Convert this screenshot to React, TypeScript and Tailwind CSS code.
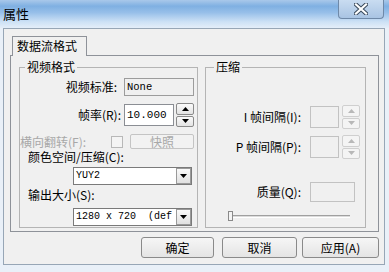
import React from "react";

const cjk = "font-['Noto_Sans_CJK_SC','Noto_Sans',sans-serif]";
const mono = "font-['Liberation_Mono',monospace]";

const Tri: React.FC<{ up?: boolean; color?: string }> = ({ up, color = "#000" }) => (
  <svg width="7" height="4" viewBox="0 0 7 4">
    {up ? <polygon points="0,4 7,4 3.5,0" fill={color} /> : <polygon points="0,0 7,0 3.5,4" fill={color} />}
  </svg>
);

const Spinner: React.FC<{ disabled?: boolean }> = ({ disabled }) => {
  const btn = disabled
    ? "border-[#cfcfcf] bg-[#f4f4f4]"
    : "border-[#8a8a8a] bg-[linear-gradient(#fafafa,#e3e3e3)]";
  const c = disabled ? "#b8b8b8" : "#000";
  return (
    <div className="flex flex-col w-[18px] h-[24px] gap-[1px]">
      <div className={`flex-1 flex items-center justify-center border rounded-[2px] ${btn}`}>
        <Tri up color={c} />
      </div>
      <div className={`flex-1 flex items-center justify-center border rounded-[2px] ${btn}`}>
        <Tri color={c} />
      </div>
    </div>
  );
};

const Combo: React.FC<{ value: string }> = ({ value }) => (
  <div className="ml-[53px] w-[119px] h-[18px] flex border border-[#7a7a7a] bg-white">
    <div className={`flex-1 whitespace-pre pl-[2px] text-[10px] leading-[16px] ${mono}`}>{value}</div>
    <div className="w-[15px] h-full flex items-center justify-center border border-[#9a9a9a] bg-[linear-gradient(#fafafa,#e0e0e0)]">
      <Tri />
    </div>
  </div>
);

const Button: React.FC<{ label: string; w: string }> = ({ label, w }) => (
  <button className={`${w} h-[21px] border border-[#8a8a8a] rounded-[3px] bg-[linear-gradient(#f6f6f6,#e4e4e4)] text-[12px] leading-[19px] text-black ${cjk}`}>
    {label}
  </button>
);

export default function App() {
  return (
    <div className={`w-[389px] h-[272px] overflow-hidden bg-[#e9f0f8] flex flex-col text-black ${cjk}`}>
      {/* Title bar */}
      <div className="h-[28px] flex items-start justify-between bg-[linear-gradient(180deg,#a9c8ea_0%,#7fb0e2_22%,#97bfe9_45%,#cde1f5_78%,#e4eef9_100%)]">
        <div className="pl-[3px] pt-[6px] text-[13px] leading-[16px] text-black">属性</div>
        <div className="mr-[5px] w-[46px] h-[19px] rounded-b-[4px] border border-t-0 border-[#6f89a8] bg-[linear-gradient(#c9dcf1,#a9c4e3)] flex items-center justify-center">
          <svg width="14" height="12" viewBox="0 0 14 12">
            <path d="M2 1.5 L12 10.5 M12 1.5 L2 10.5" stroke="#3a4a5c" strokeWidth="4.2" strokeLinecap="square" />
            <path d="M2 1.5 L12 10.5 M12 1.5 L2 10.5" stroke="#ffffff" strokeWidth="2.2" strokeLinecap="square" />
          </svg>
        </div>
      </div>

      {/* Client area */}
      <div className="ml-[3px] w-[382px] h-[237px] border border-[#97a6b6] bg-[#f0f0f0] flex flex-col">
        <div className="pl-[6px] pt-[7px]">
          {/* Tab header */}
          <div className="relative z-10 ml-[2px] -mb-px w-[75px] h-[20px] border border-b-0 border-[#8e9299] bg-[#f0f0f0] text-[12px] leading-[18px] pl-[4px]">
            数据流格式
          </div>
          {/* Tab panel */}
          <div className="w-[369px] h-[177px] border border-[#8e9299] bg-[#f0f0f0] flex pl-[8px] pt-[4px] gap-[7px]">
            {/* 视频格式 */}
            <fieldset className="w-[179px] h-[168px] border border-[#b4b4b4] flex flex-col">
              <legend className="ml-[5px] px-[2px] text-[12px] leading-[14px]">视频格式</legend>
              <div className="mt-[4px] h-[18px] flex items-center">
                <div className="w-[101px] text-right text-[12px] leading-[14px] pr-[4px]">视频标准:</div>
                <div className={`ml-[3px] w-[70px] h-[18px] border border-[#9c9c9c] bg-[#f0f0f0] pl-[2px] text-[10.5px] leading-[16px] ${mono}`}>None</div>
              </div>
              <div className="mt-[7px] h-[24px] flex items-center">
                <div className="w-[101px] text-right text-[12px] leading-[14px]">帧率(R):</div>
                <div className={`ml-[3px] w-[50px] h-[22px] border border-[#8b8e94] bg-white pl-[2px] text-[11px] leading-[20px] ${mono}`}>10.000</div>
                <div className="ml-[2px]"><Spinner /></div>
              </div>
              <div className="mt-[7px] h-[15px] flex items-center">
                <div className="w-[78px] text-[12px] leading-[14px] text-[#a8a8a8] whitespace-nowrap">横向翻转(F):</div>
                <div className="ml-[13px] w-[12px] h-[12px] border border-[#b8b8b8] bg-[#f4f4f4]" />
                <div className="ml-[7px] w-[64px] h-[15px] border border-[#c4c4c4] rounded-[2px] bg-[#f2f2f2] text-center text-[12px] leading-[13px] text-[#a8a8a8]">快照</div>
              </div>
              <div className="mt-[1px] h-[14px] pl-[8px] text-[12px] leading-[14px] whitespace-nowrap">颜色空间/压缩(C):</div>
              <div className="mt-[3px]"><Combo value="YUY2" /></div>
              <div className="mt-[3px] h-[14px] pl-[8px] text-[12px] leading-[14px]">输出大小(S):</div>
              <div className="mt-[6px]"><Combo value="1280 x 720  (def" /></div>
            </fieldset>

            {/* 压缩 */}
            <fieldset className="w-[161px] h-[168px] border border-[#b4b4b4] flex flex-col">
              <legend className="ml-[8px] px-[2px] text-[12px] leading-[14px]">压缩</legend>
              <div className="mt-[31px] h-[24px] flex items-center">
                <div className="w-[95px] text-right text-[12px] leading-[14px] whitespace-nowrap">I 帧间隔(I):</div>
                <div className="ml-[9px] w-[29px] h-[22px] border border-[#c2c2c2] bg-[#f0f0f0]" />
                <div className="ml-[3px]"><Spinner disabled /></div>
              </div>
              <div className="mt-[6px] h-[24px] flex items-center">
                <div className="w-[95px] text-right text-[12px] leading-[14px] whitespace-nowrap">P 帧间隔(P):</div>
                <div className="ml-[9px] w-[29px] h-[22px] border border-[#c2c2c2] bg-[#f0f0f0]" />
                <div className="ml-[3px]"><Spinner disabled /></div>
              </div>
              <div className="mt-[23px] h-[20px] flex items-center">
                <div className="w-[95px] text-right text-[12px] leading-[14px]">质量(Q):</div>
                <div className="ml-[9px] w-[45px] h-[20px] border border-[#c2c2c2] bg-[#f0f0f0]" />
              </div>
              <div className="mt-[9px] ml-[22px] w-[122px] h-[10px] flex items-center">
                <div className="w-[5px] h-[10px] border border-[#8a8a8a] bg-[#f4f4f4]" />
                <div className="flex-1 h-[3px] border-t border-[#a0a0a0] border-b border-b-white bg-[#dcdcdc]" />
              </div>
            </fieldset>
          </div>
        </div>

        {/* Buttons */}
        <div className="mt-[5px] pr-[5px] flex justify-end">
          <Button label="确定" w="w-[73px]" />
          <div className="w-[8px]" />
          <Button label="取消" w="w-[75px]" />
          <div className="w-[5px]" />
          <Button label="应用(A)" w="w-[77px]" />
        </div>
      </div>
    </div>
  );
}
